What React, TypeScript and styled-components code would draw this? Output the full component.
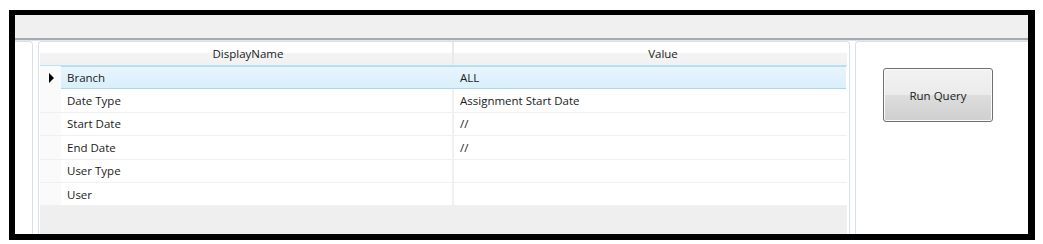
import styled, { createGlobalStyle } from "styled-components";

interface Param {
  name: string;
  value: string;
}

const params: Param[] = [
  { name: "Branch", value: "ALL" },
  { name: "Date Type", value: "Assignment Start Date" },
  { name: "Start Date", value: "//" },
  { name: "End Date", value: "//" },
  { name: "User Type", value: "" },
  { name: "User", value: "" },
];

const COLS = "21px 393px 392px";

export default function App() {
  return (
    <>
      <GlobalStyle />
      <Frame>
        <TopBar />
        <Body>
          <SidePanel />
          <Splitter />
          <GridPanel>
            <Grid>
              <HeaderRow>
                <HeaderCell $pl={0} $pr={0} />
                <HeaderCell $pl={0} $pr={19}>
                  DisplayName
                </HeaderCell>
                <HeaderCell $pl={26} $pr={0} $divider>
                  Value
                </HeaderCell>
              </HeaderRow>
              {params.map((p, i) => (
                <Row key={p.name} $selected={i === 0}>
                  <RowHeader>{i === 0 && <Pointer />}</RowHeader>
                  <Cell>{p.name}</Cell>
                  <Cell $divider={i !== 0}>{p.value}</Cell>
                </Row>
              ))}
            </Grid>
          </GridPanel>
          <Splitter />
          <ActionPanel>
            <RunButton type="button">Run Query</RunButton>
          </ActionPanel>
        </Body>
      </Frame>
    </>
  );
}

const GlobalStyle = createGlobalStyle`
  body {
    margin: 0;
    background: #fff;
    font-family: "Open Sans", "Noto Sans", sans-serif;
  }
`;

const Frame = styled.div`
  box-sizing: border-box;
  margin: 10px 0 0 9px;
  width: 1026px;
  height: 230px;
  border-style: solid;
  border-color: #000;
  border-width: 5px 7px 6px 6px;
  display: flex;
  flex-direction: column;
  background: #fff;
`;

const TopBar = styled.div`
  height: 23px;
  flex-shrink: 0;
  background: #f0f0f0;
  border-bottom: 2px solid #a8a9ae;
`;

const Body = styled.div`
  flex: 1;
  min-height: 0;
  display: flex;
  border-top: 1px solid #dce8ef;
`;

const SidePanel = styled.div`
  box-sizing: border-box;
  width: 18px;
  border-top: 1px solid #d8e1e8;
  border-right: 1px solid #d8e1e8;
  border-top-right-radius: 4px;
`;

const Splitter = styled.div`
  width: 5px;
  flex-shrink: 0;
`;

const GridPanel = styled.div`
  box-sizing: border-box;
  width: 812px;
  padding: 0 2px 0 1px;
  border: 1px solid #d8e1e8;
  border-bottom: none;
  border-radius: 4px 4px 0 0;
  display: flex;
`;

const Grid = styled.div`
  flex: 1;
  display: flex;
  flex-direction: column;
  background: #efefef;
  font-size: 11.5px;
  color: #1a1a1a;
`;

const HeaderRow = styled.div`
  display: grid;
  grid-template-columns: ${COLS};
  height: 23px;
  background: linear-gradient(#ffffff 0%, #ffffff 45%, #f4f4f4 50%, #f1f1f1 100%);
  border-bottom: 1px solid #bfe0f3;
`;

const HeaderCell = styled.div<{ $pl: number; $pr: number; $divider?: boolean }>`
  display: flex;
  align-items: center;
  justify-content: center;
  padding: 0 ${(p) => p.$pr}px 0 ${(p) => p.$pl}px;
  border-left: ${(p) => (p.$divider ? "2px solid #e9e9e9" : "none")};
  margin-left: ${(p) => (p.$divider ? "-2px" : "0")};
`;

const Row = styled.div<{ $selected?: boolean }>`
  display: grid;
  grid-template-columns: ${COLS};
  height: 23.4px;
  box-sizing: border-box;
  background: #fff;
  border-bottom: ${(p) => (p.$selected ? "none" : "1.5px solid #f0f0f0")};

  & > div:not(:first-child) {
    background: ${(p) =>
      p.$selected ? "linear-gradient(#e8f5fd, #d9effb)" : "#fff"};
    border-top: ${(p) => (p.$selected ? "1px solid #b2dcf4" : "none")};
    border-bottom: ${(p) => (p.$selected ? "1px solid #a6d6f2" : "none")};
  }
`;

const RowHeader = styled.div`
  display: flex;
  align-items: center;
  justify-content: center;
  background: #fafafa;
`;

const Pointer = styled.span`
  width: 0;
  height: 0;
  margin-left: 1px;
  border-left: 5px solid #000;
  border-top: 5px solid transparent;
  border-bottom: 5px solid transparent;
`;

const Cell = styled.div<{ $divider?: boolean }>`
  box-sizing: border-box;
  display: flex;
  align-items: center;
  padding-left: 6px;
  white-space: nowrap;
  border-left: ${(p) => (p.$divider ? "2px solid #f0f0f0" : "none")};
  margin-left: ${(p) => (p.$divider ? "-2px" : "0")};
`;

const ActionPanel = styled.div`
  flex: 1;
  padding: 26px 0 0 27px;
  border-top: 1px solid #d8e1e8;
  border-left: 1px solid #d8e1e8;
  border-top-left-radius: 4px;
`;

const RunButton = styled.button`
  width: 110px;
  height: 54px;
  padding: 0;
  border: 1px solid #707070;
  border-radius: 3px;
  background: linear-gradient(#f2f2f2 0%, #ebebeb 50%, #dddddd 51%, #cfcfcf 100%);
  box-shadow: inset 0 0 0 1px #fbfbfb;
  font-family: "Open Sans", "Noto Sans", sans-serif;
  font-size: 11.5px;
  color: #1a1a1a;
`;
